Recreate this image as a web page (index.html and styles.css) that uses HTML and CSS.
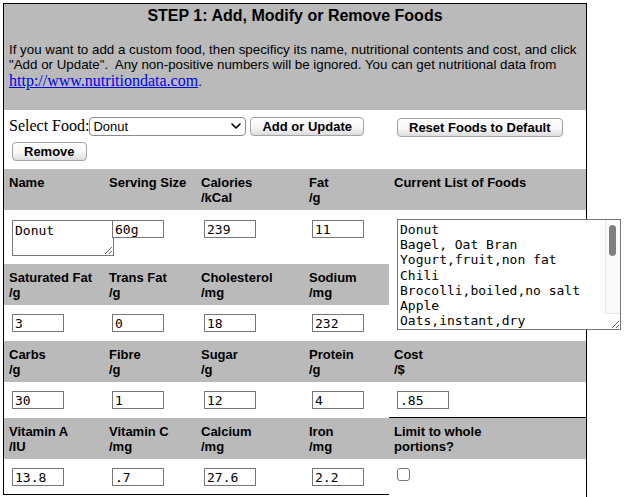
FILE: index.html
```html
<!DOCTYPE html>
<html lang="en">

<head>
    <meta charset="UTF-8">
    <title>Diet Planner - Foods</title>
    <link rel="stylesheet" href="styles.css">
</head>

<body>

    <div class="panel">
        <div class="intro">
            <h2>STEP 1: Add, Modify or Remove Foods</h2>
            <p>If you want to add a custom food, then specificy its name, nutritional contents and cost, and click<br>"Add or Update".&nbsp; Any non-positive numbers will be ignored. You can get nutritional data from<br><a href="http://www.nutritiondata.com">http://www.nutritiondata.com</a>.</p>
        </div>

        <div class="tools">
            <div class="tools-row">
                <label for="food">Select Food:</label>
                <span class="select-wrap">
                    <select id="food">
                        <option>Donut</option>
                        <option>Bagel, Oat Bran</option>
                        <option>Yogurt,fruit,non fat</option>
                    </select>
                    <svg class="chevron" width="10" height="6" viewBox="0 0 10 6">
                        <path d="M1 1l4 4 4-4" fill="none" stroke="#000" stroke-width="1.6" stroke-linecap="round" stroke-linejoin="round"/>
                    </svg>
                </span>
                <button class="btn btn-add">Add or Update</button>
            </div>
            <div class="tools-row">
                <button class="btn btn-remove">Remove</button>
            </div>
        </div>
        <div class="tools-side">
            <button class="btn">Reset Foods to Default</button>
        </div>

        <!-- row 1 -->
        <div class="hd">Name</div>
        <div class="hd">Serving Size</div>
        <div class="hd">Calories<br>/kCal</div>
        <div class="hd">Fat<br>/g</div>
        <div class="hd">Current List of Foods</div>

        <div class="cell row-first"><textarea class="name-box">Donut</textarea></div>
        <div class="cell row-first"><input class="num" type="text" value="60g"></div>
        <div class="cell row-first"><input class="num" type="text" value="239"></div>
        <div class="cell row-first"><input class="num" type="text" value="11"></div>
        <div class="cell list-cell">
            <div class="list-wrap">
                <textarea class="food-list">Donut
Bagel, Oat Bran
Yogurt,fruit,non fat
Chili
Brocolli,boiled,no salt
Apple
Oats,instant,dry
Banana
Milk,2% fat
Bread,whole wheat
Egg,hard-boiled
Peanut Butter
Orange Juice
Rice,white,cooked
Chicken Breast,roasted
Potato,baked
Carrots,raw
Cheese,cheddar</textarea>
                
                <span class="list-track"><span class="list-thumb"></span></span>
            </div>
        </div>

        <!-- row 2 -->
        <div class="hd">Saturated Fat<br>/g</div>
        <div class="hd">Trans Fat<br>/g</div>
        <div class="hd">Cholesterol<br>/mg</div>
        <div class="hd">Sodium<br>/mg</div>

        <div class="cell"><input class="num" type="text" value="3"></div>
        <div class="cell"><input class="num" type="text" value="0"></div>
        <div class="cell"><input class="num" type="text" value="18"></div>
        <div class="cell"><input class="num" type="text" value="232"></div>

        <!-- row 3 -->
        <div class="hd">Carbs<br>/g</div>
        <div class="hd">Fibre<br>/g</div>
        <div class="hd">Sugar<br>/g</div>
        <div class="hd">Protein<br>/g</div>
        <div class="hd">Cost<br>/$</div>

        <div class="cell"><input class="num" type="text" value="30"></div>
        <div class="cell"><input class="num" type="text" value="1"></div>
        <div class="cell"><input class="num" type="text" value="12"></div>
        <div class="cell"><input class="num" type="text" value="4"></div>
        <div class="cell cost-cell"><input class="num" type="text" value=".85"></div>

        <!-- row 4 -->
        <div class="hd">Vitamin A<br>/IU</div>
        <div class="hd">Vitamin C<br>/mg</div>
        <div class="hd">Calcium<br>/mg</div>
        <div class="hd">Iron<br>/mg</div>
        <div class="hd">Limit to whole<br>portions?</div>

        <div class="cell row-last"><input class="num" type="text" value="13.8"></div>
        <div class="cell row-last"><input class="num" type="text" value=".7"></div>
        <div class="cell row-last"><input class="num" type="text" value="27.6"></div>
        <div class="cell row-last"><input class="num" type="text" value="2.2"></div>
        <div class="cell check-cell"><input class="check" type="checkbox"></div>
    </div>
    <div class="panel-tail"></div>

</body>

</html>
```

FILE: styles.css
```css
body {
    margin: 0;
    font-family: "Liberation Serif", serif;
    font-size: 16px;
    color: #000;
    background: #fff;
}

.panel {
    margin: 3px 0 0 3px;
    width: 584px;
    box-sizing: border-box;
    border: 1px solid #000;
    border-bottom: none;
    display: grid;
    grid-template-columns: 100px 92px 108px 85px 197px;
}

.panel-tail {
    margin-left: 3px;
    width: 584px;
    height: 10px;
    box-sizing: border-box;
    border-right: 1px solid #000;
}

.intro {
    grid-column: 1 / -1;
    height: 106px;
    box-sizing: border-box;
    padding: 3px 5px 0;
    background: #bababa;
    font-family: "Liberation Sans", Arial, sans-serif;
    font-size: 13.33px;
}

.intro h2 {
    margin: 0;
    font-size: 16px;
    text-align: center;
}

.intro p {
    margin: 17px 0 0;
}

.intro a {
    font-family: "Liberation Serif", serif;
    font-size: 16px;
    color: #0000ee;
}

.tools {
    grid-column: 1 / span 4;
    padding: 7px 5px 8px;
}

.tools-row {
    display: flex;
    align-items: baseline;
}

.tools-row + .tools-row {
    margin-top: 6px;
}

.select-wrap {
    position: relative;
    display: inline-block;
}

.select-wrap select {
    appearance: none;
    width: 157px;
    height: 19px;
    margin: 0;
    padding: 0 0 0 3px;
    border: 1px solid #8a8a8a;
    border-radius: 4px;
    background: #fff;
    color: #000;
    font: 13px "Liberation Sans", Arial, sans-serif;
}

.chevron {
    position: absolute;
    right: 5px;
    top: 6px;
    pointer-events: none;
}

.btn {
    height: 19px;
    margin: 0;
    padding: 0 11px;
    border: 1px solid #a3a3a3;
    border-radius: 4px;
    background: linear-gradient(#fff, #f7f7f7 55%, #dcdcdc);
    color: #000;
    font: bold 13px "Liberation Sans", Arial, sans-serif;
}

.btn-add {
    margin-left: 4px;
}

.btn-remove {
    margin-left: 3px;
}

.tools-side {
    padding: 8px 0 0 8px;
}

.hd {
    padding: 6px 5px 5px;
    background: #bababa;
    font: bold 13px/15px "Liberation Sans", Arial, sans-serif;
    white-space: nowrap;
}

.cell {
    min-width: 0;
    padding: 9px 5px 9px 8px;
}

.row-first {
    padding-top: 10px;
    padding-bottom: 8px;
}

.cost-cell {
    padding-bottom: 8px;
    border-bottom: 1px solid #000;
}

.row-last {
    padding-bottom: 8px;
    border-bottom: 1px solid #000;
}

.list-cell {
    grid-column: 5;
    grid-row: 4 / span 3;
}

.num {
    display: block;
    width: 52px;
    height: 18px;
    box-sizing: border-box;
    margin: 0;
    padding: 1px 2px;
    border: 1px solid #767676;
    font: 13px "DejaVu Sans Mono", monospace;
    color: #000;
}

.name-box {
    display: block;
    width: 102px;
    height: 36px;
    box-sizing: border-box;
    margin: 0;
    padding: 2px 2px 1px;
    border: 1px solid #767676;
    font: 13px "DejaVu Sans Mono", monospace;
}

.list-wrap {
    position: relative;
    width: 224px;
    height: 111px;
}

.food-list {
    display: block;
    width: 224px;
    height: 111px;
    box-sizing: border-box;
    margin: 0;
    padding: 2px 18px 1px 2px;
    border: 1px solid #767676;
    font: 13px/15.2px "DejaVu Sans Mono", monospace;
    overflow-y: hidden;
    white-space: pre;
}

.list-track {
    position: absolute;
    top: 1px;
    right: 1px;
    bottom: 16px;
    width: 15px;
    box-sizing: border-box;
    background: #fafafa;
    border-left: 1px solid #e6e6e6;
    border-bottom: 1px solid #e6e6e6;
}

.list-thumb {
    position: absolute;
    top: 5px;
    left: 3px;
    width: 7px;
    height: 31px;
    border-radius: 4px;
    background: #7f7f7f;
}

.check {
    appearance: none;
    display: block;
    width: 13px;
    height: 13px;
    margin: 0;
    border: 1px solid #767676;
    border-radius: 3px;
    background: #fff;
}
```
